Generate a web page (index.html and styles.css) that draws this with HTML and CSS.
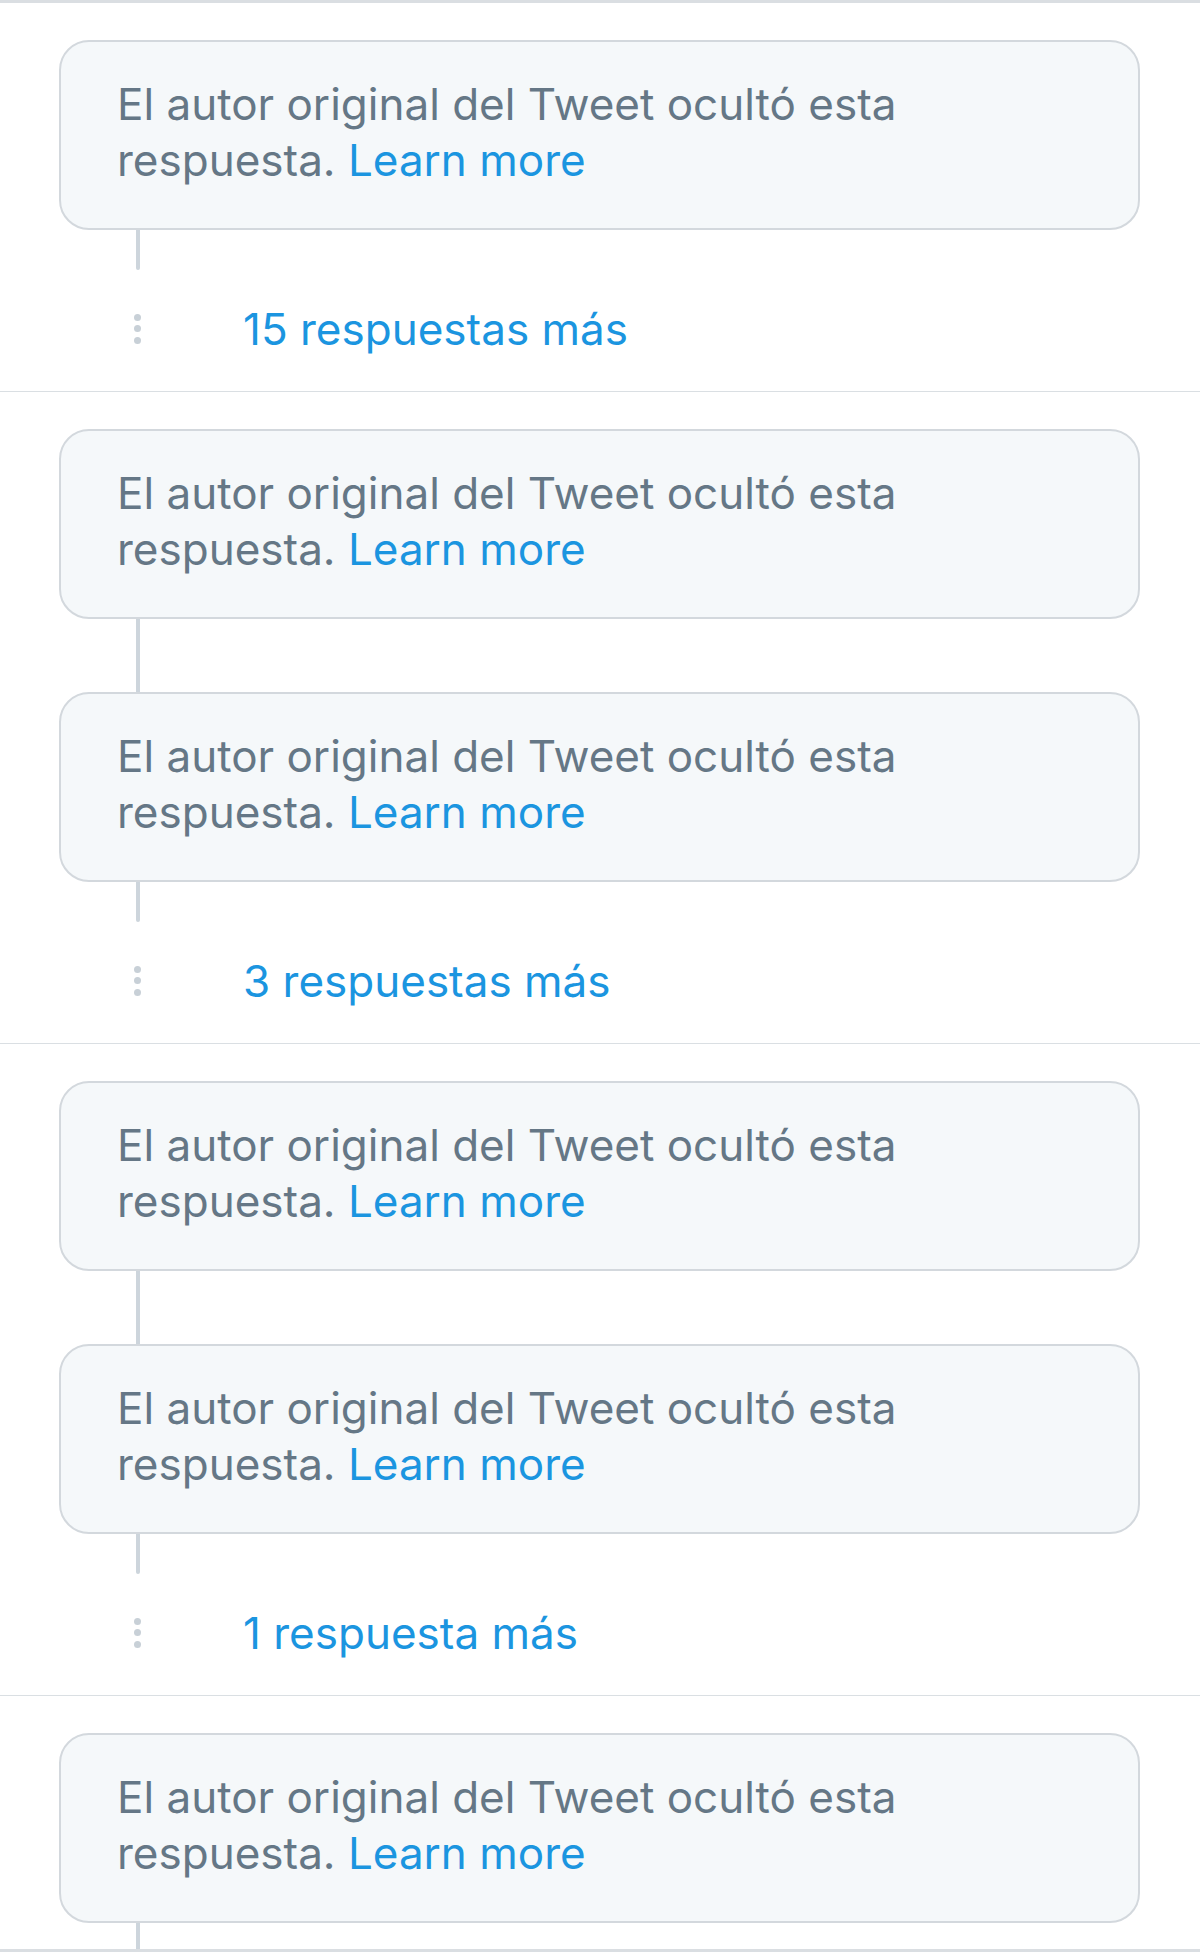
FILE: index.html
```html
<!DOCTYPE html>
<html lang="es">
<head>
<meta charset="utf-8">
<title>Respuestas ocultas</title>
<link rel="stylesheet" href="styles.css">
</head>
<body>
<main class="timeline">
  <section class="group">
    <div class="hidden-card"><p>El autor original del Tweet ocultó esta respuesta. <a href="#">Learn more</a></p></div>
    <div class="connector connector-short"></div>
    <div class="more-line">
      <div class="dots"><i></i><i></i><i></i></div>
      <a class="more-link" href="#">15 respuestas más</a>
    </div>
  </section>

  <section class="group">
    <div class="hidden-card"><p>El autor original del Tweet ocultó esta respuesta. <a href="#">Learn more</a></p></div>
    <div class="connector connector-gap"></div>
    <div class="hidden-card"><p>El autor original del Tweet ocultó esta respuesta. <a href="#">Learn more</a></p></div>
    <div class="connector connector-short"></div>
    <div class="more-line">
      <div class="dots"><i></i><i></i><i></i></div>
      <a class="more-link" href="#">3 respuestas más</a>
    </div>
  </section>

  <section class="group">
    <div class="hidden-card"><p>El autor original del Tweet ocultó esta respuesta. <a href="#">Learn more</a></p></div>
    <div class="connector connector-gap"></div>
    <div class="hidden-card"><p>El autor original del Tweet ocultó esta respuesta. <a href="#">Learn more</a></p></div>
    <div class="connector connector-short"></div>
    <div class="more-line">
      <div class="dots"><i></i><i></i><i></i></div>
      <a class="more-link" href="#">1 respuesta más</a>
    </div>
  </section>

  <section class="group group-last">
    <div class="hidden-card"><p>El autor original del Tweet ocultó esta respuesta. <a href="#">Learn more</a></p></div>
    <div class="connector connector-tail"></div>
  </section>
</main>
</body>
</html>
```
FILE: styles.css
```css
* { box-sizing: border-box; }

html, body {
  margin: 0;
  padding: 0;
  background: #ffffff;
}

body {
  font-family: Inter, "Noto Sans", "Liberation Sans", sans-serif;
  overflow: hidden;
}

.timeline {
  border-top: 3px solid #dadee2;
  border-bottom: 3px solid #dadee2;
}

.group {
  padding: 37px 60px 0 59px;
  border-bottom: 1px solid #dadfe3;
}

.group-last {
  border-bottom: none;
}

.hidden-card {
  height: 190px;
  border: 2px solid #d3d8dd;
  border-radius: 30px;
  background: #f5f8fa;
  padding: 0 40px 6px 56px;
  display: flex;
  align-items: center;
}

.hidden-card p {
  margin: 0;
  font-size: 44px;
  line-height: 56px;
  color: #657786;
  max-width: 860px;
}

.hidden-card a {
  color: #1b95e0;
  text-decoration: none;
}

.connector {
  width: 4px;
  margin-left: 77px;
  background: #cdd5dc;
}

.connector-gap { height: 73px; }

.connector-short {
  height: 40px;
  border-radius: 0 0 2px 2px;
}

.connector-tail { height: 26px; }

.more-line {
  height: 117px;
  margin-bottom: 4px;
  display: flex;
  align-items: center;
}

.dots {
  width: 157px;
  display: flex;
  flex-direction: column;
  align-items: center;
  gap: 4.5px;
}

.dots i {
  display: block;
  width: 7px;
  height: 7px;
  border-radius: 50%;
  background: #c8d0d7;
}

.more-link {
  margin-left: 27px;
  font-size: 44px;
  line-height: 56px;
  color: #1b95e0;
  text-decoration: none;
}
```
